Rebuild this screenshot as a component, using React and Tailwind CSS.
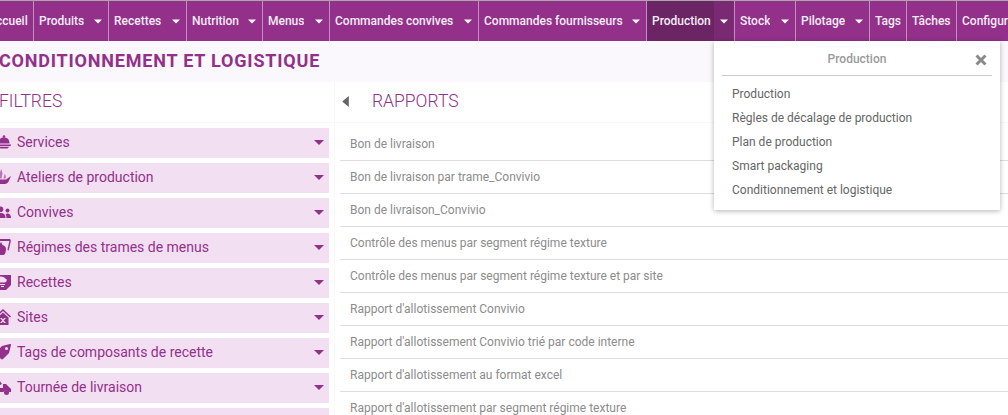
import React from "react";

const navItems = [
  { label: "Accueil", width: "w-[46px]", first: true },
  { label: "Produits", width: "w-[75px]", arrow: true },
  { label: "Recettes", width: "w-[78px]", arrow: true },
  { label: "Nutrition", width: "w-[76px]", arrow: true },
  { label: "Menus", width: "w-[67px]", arrow: true },
  { label: "Commandes convives", width: "w-[149px]", arrow: true },
  { label: "Commandes fournisseurs", width: "w-[168px]", arrow: true },
  { label: "Production", width: "w-[88px]", arrow: true, active: true },
  { label: "Stock", width: "w-[61px]", arrow: true },
  { label: "Pilotage", width: "w-[74px]", arrow: true },
  { label: "Tags", width: "w-[37px]" },
  { label: "Tâches", width: "w-[50px]" },
  { label: "Configuration", width: "w-[100px]" },
];

const IconServices = () => (
  <svg viewBox="0 0 16 14" className="w-4 h-[14px] fill-[#93308a]">
    <circle cx="9" cy="1.500" r="1.300" />
    <path d="M3.500 8.500C3.500 4.500 5.500 2.500 9 2.500s5.500 2 5.500 6z" />
    <path d="M0 9.500h16v1c-.5.5-1 .8-2 .8H2c-1 0-1.500-.3-2-.8zM4 12h10l-1.500 1.500h-7z" />
  </svg>
);
const IconAtelier = () => (
  <svg viewBox="0 0 16 16" className="w-4 h-4 fill-[#93308a]">
    <path d="M0 10.500h11l5-3.500-2.500 5.500c-.7 1.500-2 2.500-3.500 2.500H5c-2.500 0-4-2-5-4.500z" />
    <path d="M4.500 9.500C3 7.500 5 6 5 4s1-3 1.500-4c0 2 1 3 1 4.500s-1 3-.7 5zM8.500 9.500c0-2 1-2.500 1-4.500 1.200 1 1.800 3 1 4.500z" opacity=".6" />
  </svg>
);
const IconUsers = () => (
  <svg viewBox="0 0 16 12" className="w-4 h-3 fill-[#93308a]">
    <circle cx="5.500" cy="3.200" r="2.800" />
    <path d="M.5 12c0-3.500 1.500-5 5-5s5 1.500 5 5z" />
    <circle cx="12.500" cy="4.500" r="2" />
    <path d="M11.500 12c0-2-.3-3-1-4 1-1 5.500-1.200 5.500 4z" />
  </svg>
);
const IconRegime = () => (
  <svg viewBox="0 0 16 16" className="w-4 h-4 fill-[#93308a]">
    <path d="M1 0h13c1.500 0 2 1 1.700 2.500l-2 9-1.300-.4 2-9.200H1z" />
    <path d="M6 3l1.500 3c2 .5 3.500 2 3.500 4 0 2.500-1 6-2.500 6H1c-1 0-1-3-1-4 0-3 2-5 4-6z" />
  </svg>
);
const IconRecette = () => (
  <svg viewBox="0 0 16 16" className="w-4 h-4 fill-[#93308a]">
    <path fillRule="evenodd" d="M0 1h16v10l-5 5H0zM6 2.500C4 2.500 3 3.500 3 4.500c-2.500 0-2.500 4 1 4h5c3.500 0 3.500-4 1-4 0-1-2-2-4-2zM1 10v1h9v-1zM2 12v3h2v-3zM6 12v1h3v-1z" />
  </svg>
);
const IconSite = () => (
  <svg viewBox="0 0 16 16" className="w-4 h-4 fill-[#93308a]">
    <path fillRule="evenodd" d="M8 0l8 7.500-1 1-7-6.500-7 6.500-1-1zM2.500 8.500L8 3.500l5.500 5V16h-11zM5 9l2.300 2.500L5 14h1.800L8 12.500 9.200 14H11l-2.300-2.500L11 9H9.200L8 10.500 6.800 9z" />
  </svg>
);
const IconTag = () => (
  <svg viewBox="0 0 16 16" className="w-4 h-4 fill-[#93308a]">
    <path fillRule="evenodd" d="M7 2l8-2c1 0 1 .5 1 1l-2 8-6 6c-.6.600-1.400.600-2 0L1 10c-.6-.6-.6-1.400 0-2zM11.500 3a1.500 1.500 0 100 3 1.500 1.500 0 000-3z" />
  </svg>
);
const IconTruck = () => (
  <svg viewBox="0 0 16 15" className="w-4 h-[15px] fill-[#93308a]">
    <path d="M0 2l4-2 3 4-4 2z" />
    <path d="M0 8h8V4h3l5 5v3h-2a3 3 0 00-5.500 0H5a3 3 0 00-5 0z" />
    <circle cx="3" cy="13" r="2" />
    <circle cx="11.500" cy="12.500" r="2.500" />
  </svg>
);

const filters = [
  { label: "Services", Icon: IconServices },
  { label: "Ateliers de production", Icon: IconAtelier },
  { label: "Convives", Icon: IconUsers },
  { label: "Régimes des trames de menus", Icon: IconRegime },
  { label: "Recettes", Icon: IconRecette },
  { label: "Sites", Icon: IconSite },
  { label: "Tags de composants de recette", Icon: IconTag },
  { label: "Tournée de livraison", Icon: IconTruck },
  { label: "Types de convives" },
];

const reports = [
  "Bon de livraison",
  "Bon de livraison par trame_Convivio",
  "Bon de livraison_Convivio",
  "Contrôle des menus par segment régime texture",
  "Contrôle des menus par segment régime texture et par site",
  "Rapport d'allotissement Convivio",
  "Rapport d'allotissement Convivio trié par code interne",
  "Rapport d'allotissement au format excel",
  "Rapport d'allotissement par segment régime texture",
];

const menuLinks = [
  "Production",
  "Règles de décalage de production",
  "Plan de production",
  "Smart packaging",
  "Conditionnement et logistique",
];

export default function App() {
  return (
    <div className="relative w-[1008px] h-[415px] overflow-hidden bg-white font-['Roboto','Liberation_Sans',sans-serif]">
      <div className="h-px bg-[#a8a8a8]" />
      <nav className="flex h-10 w-[1100px] ml-[-12px] bg-[#93308a]">
        {navItems.map((item) => (
          <div
            key={item.label}
            className={`${item.width} shrink-0 flex h-10 items-stretch border-r border-[#c48fc0] text-[12px] font-medium text-[#f6ecf5] ${item.active ? "bg-[#7a2a72]" : ""}`}
          >
            <span className={`flex items-center ${item.active ? "w-[67px] bg-[#6b2565]" : ""} ${item.arrow ? "" : "flex-1"} ${item.first ? "pl-0" : "pl-[5px]"} whitespace-nowrap overflow-hidden`}>
              {item.label}
            </span>
            {item.arrow && (
              <span className="flex flex-1 items-center justify-end pr-[6px]">
                <svg viewBox="0 0 10 5" className="w-2 h-[5px] fill-white">
                  <path d="M0 0h10L5 5z" />
                </svg>
              </span>
            )}
          </div>
        ))}
      </nav>

      <div className="h-[41px] bg-[#fbf8fd] flex items-center pb-[2px]">
        <h1 className="ml-[-1px] text-[18px] leading-none font-bold tracking-[0.8px] text-[#93308a] whitespace-nowrap">
          CONDITIONNEMENT ET LOGISTIQUE
        </h1>
      </div>

      <div className="flex">
        <aside className="w-[335px] shrink-0 border-r border-[#f8f8f8]">
          <h2 className="h-[41px] flex items-center pb-[2px] ml-[-1px] text-[17.5px] font-light text-[#93308a] border-b border-[#f8f8f8]">
            FILTRES
          </h2>
          <div className="flex flex-col gap-[5px] mt-[5px] w-[329px]">
            {filters.map(({ label, Icon }) => (
              <div key={label} className="h-[30px] shrink-0 flex items-center pb-[2px] bg-[#f3dff2] text-[14px] text-[#93308a]">
                <span className="w-4 ml-[-5px] mr-[6px] flex justify-center">{Icon && <Icon />}</span>
                <span className="flex-1 whitespace-nowrap">{label}</span>
                <span className="pr-[5px]">
                  <svg viewBox="0 0 10 5" className="w-[10px] h-[5px] fill-[#93308a]">
                    <path d="M0 0h10L5 5z" />
                  </svg>
                </span>
              </div>
            ))}
          </div>
        </aside>

        <section className="flex-1 pl-[5px]">
          <div className="h-[41px] flex items-center pb-[2px] border-b border-[#f8f8f8] ml-[-5px]">
            <svg viewBox="0 0 6 10" className="w-[7px] h-[11px] ml-[7px] fill-[#666666]">
              <path d="M6 0v10L0 5z" />
            </svg>
            <h2 className="ml-[23px] text-[17.5px] font-light text-[#93308a]">RAPPORTS</h2>
          </div>
          <ul className="pt-[5px]">
            {reports.map((report) => (
              <li key={report} className="h-[33px] pl-[10px] flex items-center border-b border-[#dddddd] text-[12px] text-[#8c8c8c] whitespace-nowrap">
                {report}
              </li>
            ))}
          </ul>
        </section>
      </div>

      <div className="absolute left-[714px] top-[41px] w-[286px] h-[169px] bg-white px-2 shadow-[0_1px_5px_rgba(0,0,0,0.3)]">
        <div className="relative h-[35px] flex items-center justify-center pt-[2px] border-b border-[#cccccc] text-[12px] font-medium text-[#9a9a9a]">
          Production
          <svg viewBox="0 0 12 12" className="absolute right-[5px] top-[13px] w-3 h-3 fill-none stroke-[#8a8a8a] stroke-[3]">
            <path d="M1.500 1.500l9 9M10.500 1.500l-9 9" />
          </svg>
        </div>
        <ul className="pt-[6px] pl-[10px]">
          {menuLinks.map((link) => (
            <li key={link} className="h-6 flex items-center text-[12px] text-[#666666]">
              {link}
            </li>
          ))}
        </ul>
      </div>
    </div>
  );
}
